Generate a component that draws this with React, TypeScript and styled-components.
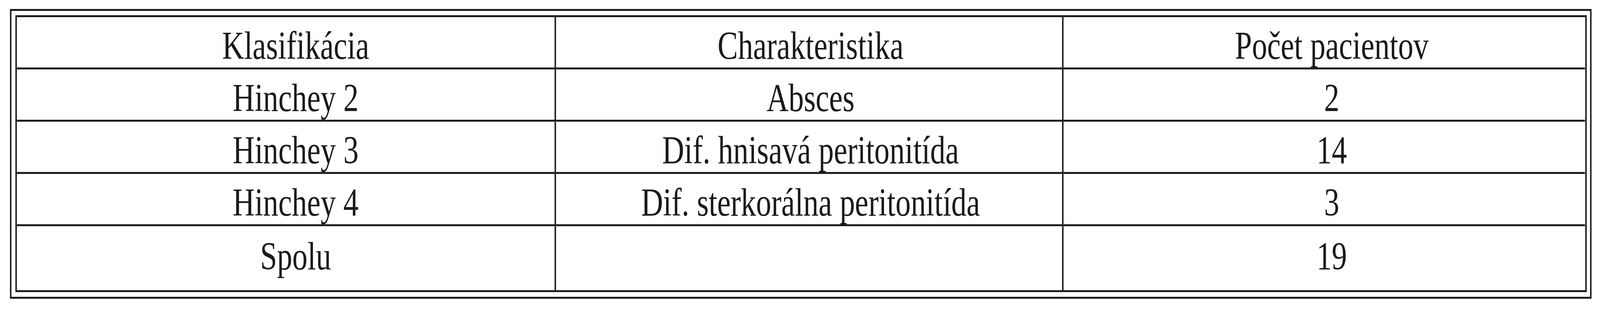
import React from "react";
import styled, { createGlobalStyle } from "styled-components";

const DESIGN_WIDTH = 5309;

const Global = createGlobalStyle`
  html, body {
    margin: 0;
    padding: 0;
    background: #ffffff;
    overflow: hidden;
  }
  body {
    font-family: "Liberation Serif", "Times New Roman", serif;
    color: #1a1a1a;
  }
`;

const Page = styled.div`
  padding: 23px 0 0 33px;
  width: ${DESIGN_WIDTH}px;
  height: 800px;
  box-sizing: border-box;
  transform-origin: 0 0;
`;

const Frame = styled.div`
  width: 5248px;
  box-sizing: border-box;
  border: 5px solid #1e1e1e;
  padding: 11px 11px 12px 13px;
`;

const Table = styled.div`
  display: grid;
  grid-template-columns: 1789px 1684px 1730px;
  border: 5px solid #1e1e1e;
`;

const Cell = styled.div<{ $last?: boolean; $lastRow?: boolean; $indent: number }>`
  height: ${(p) => (p.$lastRow ? 164 : 134)}px;
  box-sizing: border-box;
  border-right: ${(p) => (p.$last ? "none" : "5px solid #1e1e1e")};
  border-bottom: ${(p) => (p.$lastRow ? "none" : "5px solid #1e1e1e")};
  display: flex;
  align-items: center;
  justify-content: center;
  padding: ${(p) => (p.$lastRow ? "0 0 10px" : "16px 0 0")} ${(p) => p.$indent}px;
  padding-right: 0;
  font-size: 101px;
  line-height: 116px;
  white-space: nowrap;
  color: #1a1a1a;
`;

const indents = [66, 10, 50];

const rows: string[][] = [
  ["Klasifikácia", "Charakteristika", "Počet pacientov"],
  ["Hinchey 2", "Absces", "2"],
  ["Hinchey 3", "Dif. hnisavá peritonitída", "14"],
  ["Hinchey 4", "Dif. sterkorálna peritonitída", "3"],
  ["Spolu", "", "19"],
];

export default function App() {
  const fit = typeof window !== "undefined" ? window.innerWidth / DESIGN_WIDTH : 1;
  return (
    <>
      <Global />
      <Page style={{ transform: `scaleX(${fit})` }}>
        <Frame>
          <Table>
            {rows.map((r, i) =>
              r.map((c, j) => (
                <Cell
                  key={`${i}-${j}`}
                  $last={j === r.length - 1}
                  $lastRow={i === rows.length - 1}
                  $indent={indents[j]}
                >
                  {c}
                </Cell>
              ))
            )}
          </Table>
        </Frame>
      </Page>
    </>
  );
}
